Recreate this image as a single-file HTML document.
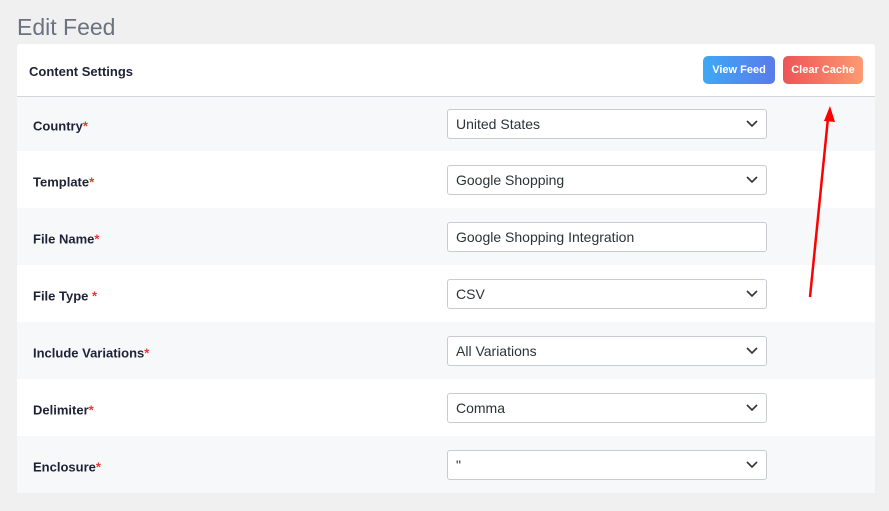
<html><head><style>
body{margin:0;width:889px;height:511px;background:#f0f0f1;font-family:"Liberation Sans",sans-serif;position:relative;overflow:hidden}
h1{position:absolute;left:17px;top:14px;margin:0;font-weight:400;font-size:23px;color:#6b7280}
.card{position:absolute;left:17px;top:44px;width:858px;height:449px;background:#fff;border-radius:3px}
.hd{height:52px;border-bottom:1px solid #d4d6dc;position:relative}
.hd b{position:absolute;left:12px;top:20px;font-size:13px;color:#1e2235}
.btn{position:absolute;top:12px;height:28px;line-height:29px;border-radius:5px;color:#fff;font-weight:bold;font-size:11px;text-align:center}
.row{height:57px;position:relative}
.row.g{background:#f7f8fa}
.row label{position:absolute;left:16px;top:50%;margin-top:2px;transform:translateY(-50%);font-weight:bold;font-size:13px;color:#1e2235}
.row label i{color:#e53935;font-style:normal}
.sel{position:absolute;left:430px;top:50%;margin-top:-15px;width:310px;height:28px;border:1px solid #c8cbd0;border-radius:3px;background:#fff;font-size:14px;color:#2c3338;line-height:28px;padding-left:8px;box-sizing:content-box}
.sel svg{position:absolute;right:8px;top:10px}
</style></head><body>
<h1>Edit Feed</h1>
<div class="card">
<div class="hd"><b>Content Settings</b>
<div class="btn" style="left:686px;width:72px;background:linear-gradient(90deg,#3ea8f5,#5a7bea)">View Feed</div>
<div class="btn" style="left:766px;width:80px;background:linear-gradient(90deg,#ec5555,#fd9a72)">Clear Cache</div>
</div>
<div class="row g" style="height:54px"><label>Country<i>*</i></label><div class="sel">United States<svg width="12" height="8"><path d="M1 1l5 5 5-5" stroke="#333" stroke-width="1.6" fill="none"/></svg></div></div>
<div class="row"><label>Template<i>*</i></label><div class="sel">Google Shopping<svg width="12" height="8"><path d="M1 1l5 5 5-5" stroke="#333" stroke-width="1.6" fill="none"/></svg></div></div>
<div class="row g"><label>File Name<i>*</i></label><div class="sel">Google Shopping Integration</div></div>
<div class="row"><label>File Type <i>*</i></label><div class="sel">CSV<svg width="12" height="8"><path d="M1 1l5 5 5-5" stroke="#333" stroke-width="1.6" fill="none"/></svg></div></div>
<div class="row g"><label>Include Variations<i>*</i></label><div class="sel">All Variations<svg width="12" height="8"><path d="M1 1l5 5 5-5" stroke="#333" stroke-width="1.6" fill="none"/></svg></div></div>
<div class="row"><label>Delimiter<i>*</i></label><div class="sel">Comma<svg width="12" height="8"><path d="M1 1l5 5 5-5" stroke="#333" stroke-width="1.6" fill="none"/></svg></div></div>
<div class="row g"><label>Enclosure<i>*</i></label><div class="sel">"<svg width="12" height="8"><path d="M1 1l5 5 5-5" stroke="#333" stroke-width="1.6" fill="none"/></svg></div></div>
</div>
<svg style="position:absolute;left:0;top:0" width="889" height="511"><line x1="810" y1="297" x2="828" y2="118" stroke="#f00" stroke-width="2.5"/><path d="M830 106 L824 121 L835 122Z" fill="#f00"/></svg>
</body></html>
